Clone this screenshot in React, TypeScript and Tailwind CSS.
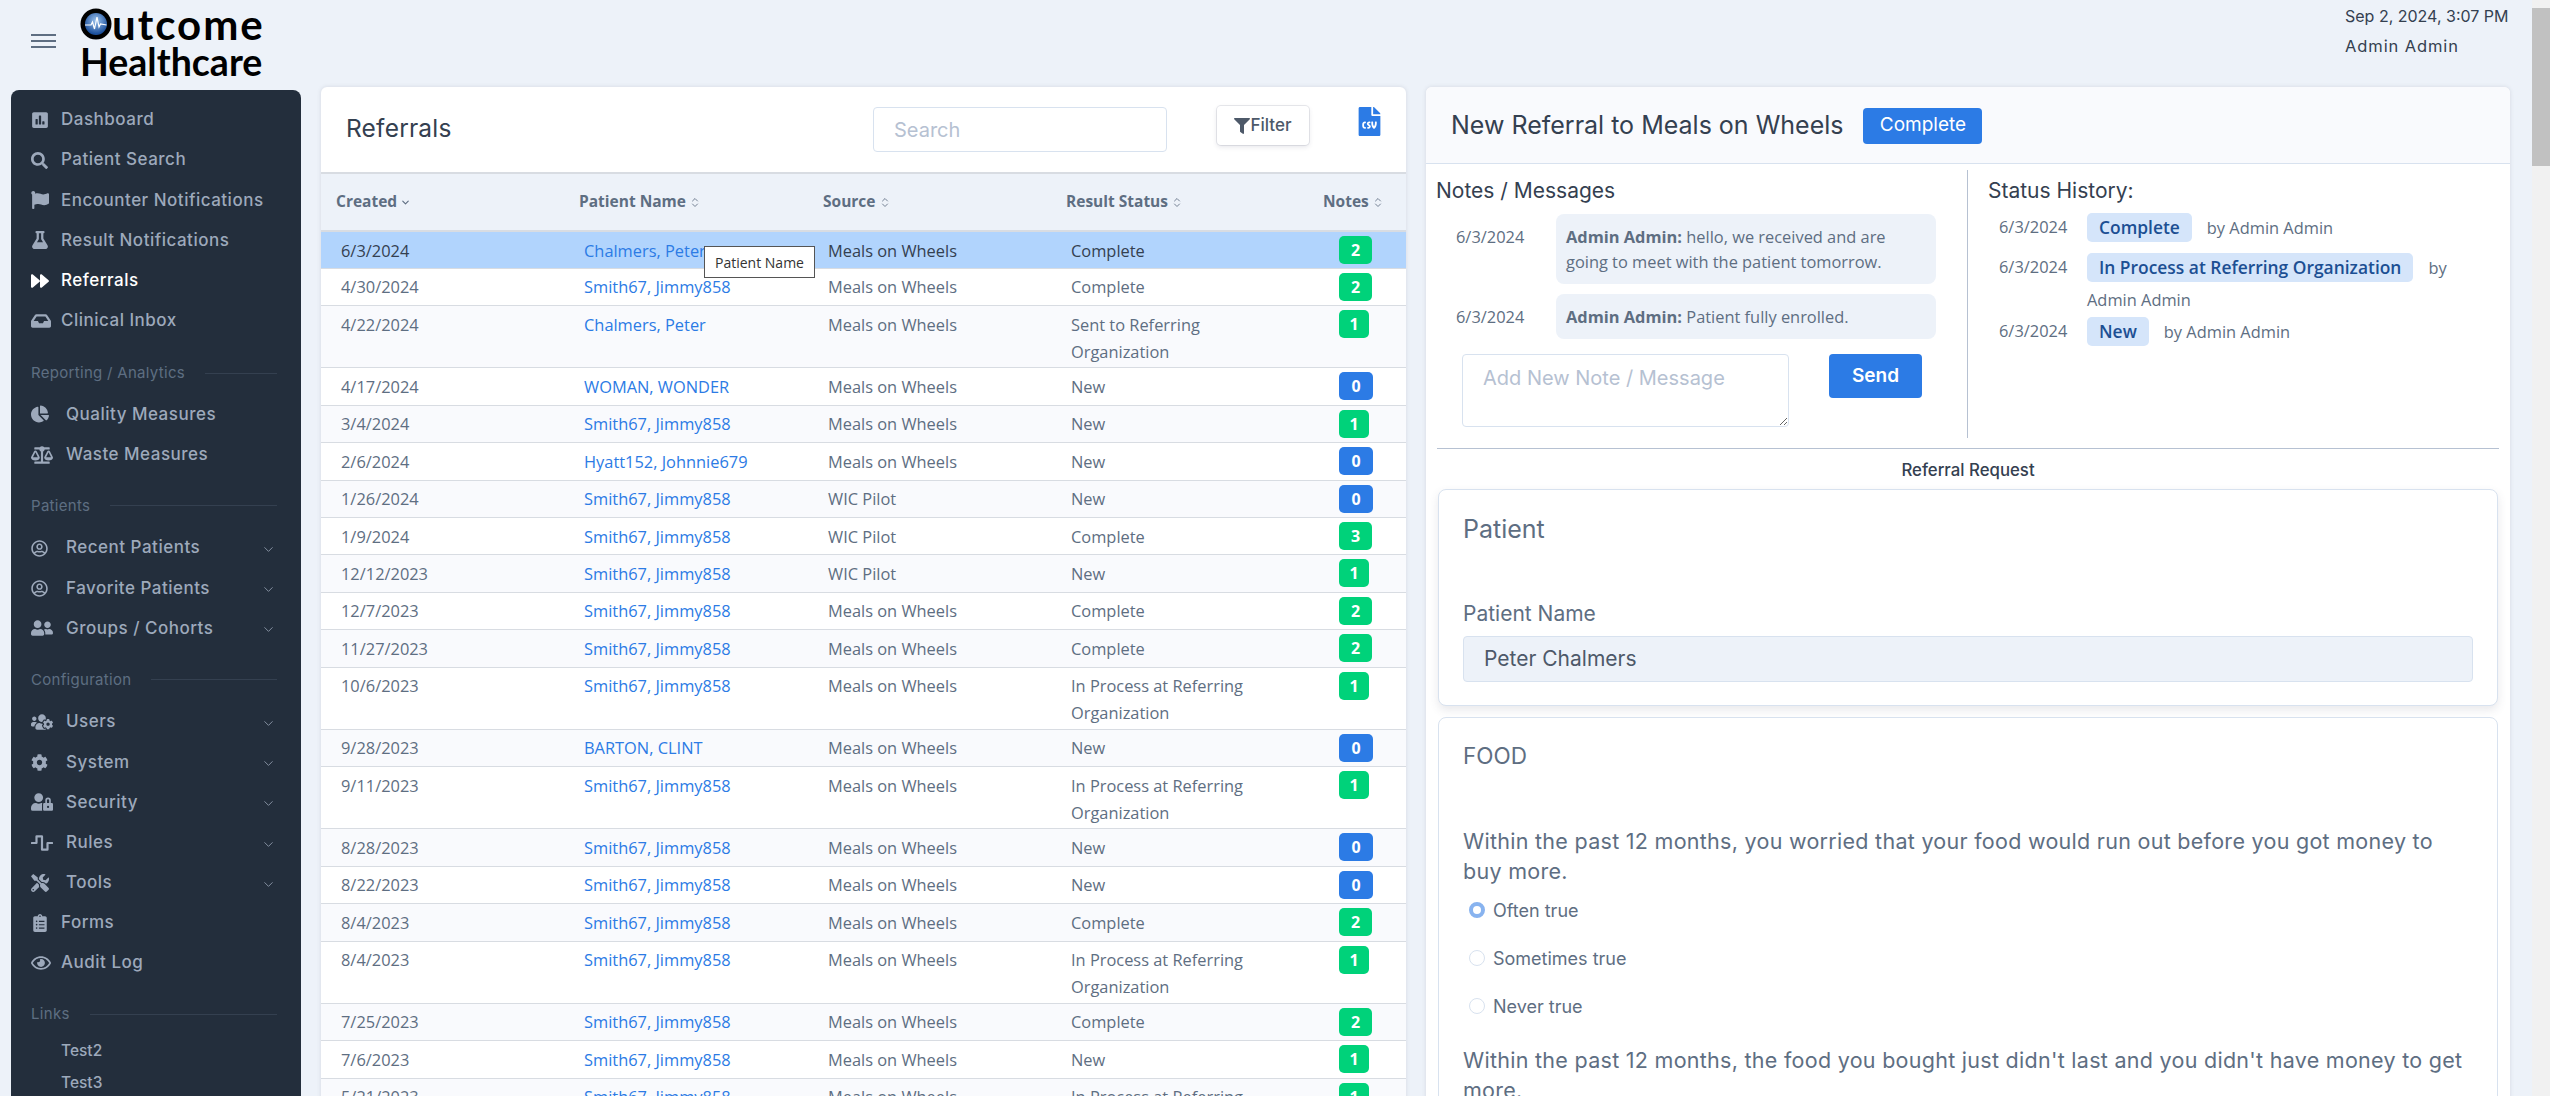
import React from 'react';
import { ChevronDown, ChevronsUpDown } from 'lucide-react';
import {
  FaPoll, FaSearch, FaFlag, FaFlask, FaForward, FaInbox, FaChartPie, FaBalanceScale, FaRegUserCircle,
  FaUserFriends, FaUsersCog, FaCog, FaUserLock, FaWaveSquare, FaTools, FaClipboardList, FaRegEye, FaFilter, FaFileCsv,
} from 'react-icons/fa';

const SMITH = 'Smith67, Jimmy858';
const MOW = 'Meals on Wheels';
const IN_PROCESS = 'In Process at Referring Organization';

const rows: [string, string, string, string, number][] = [
  ['6/3/2024', 'Chalmers, Peter', MOW, 'Complete', 2],
  ['4/30/2024', SMITH, MOW, 'Complete', 2],
  ['4/22/2024', 'Chalmers, Peter', MOW, 'Sent to Referring Organization', 1],
  ['4/17/2024', 'WOMAN, WONDER', MOW, 'New', 0],
  ['3/4/2024', SMITH, MOW, 'New', 1],
  ['2/6/2024', 'Hyatt152, Johnnie679', MOW, 'New', 0],
  ['1/26/2024', SMITH, 'WIC Pilot', 'New', 0],
  ['1/9/2024', SMITH, 'WIC Pilot', 'Complete', 3],
  ['12/12/2023', SMITH, 'WIC Pilot', 'New', 1],
  ['12/7/2023', SMITH, MOW, 'Complete', 2],
  ['11/27/2023', SMITH, MOW, 'Complete', 2],
  ['10/6/2023', SMITH, MOW, IN_PROCESS, 1],
  ['9/28/2023', 'BARTON, CLINT', MOW, 'New', 0],
  ['9/11/2023', SMITH, MOW, IN_PROCESS, 1],
  ['8/28/2023', SMITH, MOW, 'New', 0],
  ['8/22/2023', SMITH, MOW, 'New', 0],
  ['8/4/2023', SMITH, MOW, 'Complete', 2],
  ['8/4/2023', SMITH, MOW, IN_PROCESS, 1],
  ['7/25/2023', SMITH, MOW, 'Complete', 2],
  ['7/6/2023', SMITH, MOW, 'New', 1],
  ['5/21/2023', SMITH, MOW, IN_PROCESS, 1],
];

function NavItem({ icon, label, wide, sub, active }: { icon: React.ReactNode; label: string; wide?: boolean; sub?: boolean; active?: boolean }) {
  return (
    <div className={`flex items-center h-[40.15px] text-[17px] font-medium tracking-[0.5px] ${active ? 'text-white' : 'text-[#9da9bb]'}`}>
      <span className={`flex items-center shrink-0 ${wide ? 'w-[35px]' : 'w-[30px]'}`}>{icon}</span>
      <span className="flex-1">{label}</span>
      {sub && <ChevronDown className="w-[15px] h-[15px] mr-[5px] mt-[3px]" strokeWidth={1.25} />}
    </div>
  );
}

function NavLabel({ text, className }: { text: string; className: string }) {
  return (
    <div className={`flex items-center gap-[20px] text-[15px] text-[#5e6e82] pr-[4px] ${className}`}>
      <span className="tracking-[0.3px]">{text}</span>
      <span className="flex-1 h-px bg-[#344050]" />
    </div>
  );
}

function Sidebar() {
  return (
    <aside className="w-[290px] ml-[11px] mt-[3px] shrink-0 rounded-t-[8px] bg-[#232e3c] pl-[20px] pr-[20px] pt-[10px]">
      <NavItem icon={<FaPoll size={18} />} label="Dashboard" />
      <NavItem icon={<FaSearch size={17} />} label="Patient Search" />
      <NavItem icon={<FaFlag size={18} />} label="Encounter Notifications" />
      <NavItem icon={<FaFlask size={18} />} label="Result Notifications" />
      <NavItem icon={<FaForward size={18} />} label="Referrals" active />
      <NavItem icon={<FaInbox size={20} />} label="Clinical Inbox" />
      <NavLabel text="Reporting / Analytics" className="mt-[21px] mb-[10px]" />
      <NavItem wide icon={<FaChartPie size={18} />} label="Quality Measures" />
      <NavItem wide icon={<FaBalanceScale size={22} />} label="Waste Measures" />
      <NavLabel text="Patients" className="mt-[20px] mb-[11px]" />
      <NavItem wide sub icon={<FaRegUserCircle size={17} />} label="Recent Patients" />
      <NavItem wide sub icon={<FaRegUserCircle size={17} />} label="Favorite Patients" />
      <NavItem wide sub icon={<FaUserFriends size={22} />} label="Groups / Cohorts" />
      <NavLabel text="Configuration" className="mt-[20px] mb-[11px]" />
      <NavItem wide sub icon={<FaUsersCog size={22} />} label="Users" />
      <NavItem wide sub icon={<FaCog size={17} />} label="System" />
      <NavItem wide sub icon={<FaUserLock size={22} />} label="Security" />
      <NavItem wide sub icon={<FaWaveSquare size={22} />} label="Rules" />
      <NavItem wide sub icon={<FaTools size={18} />} label="Tools" />
      <NavItem icon={<FaClipboardList size={18} />} label="Forms" />
      <NavItem icon={<FaRegEye size={20} />} label="Audit Log" />
      <NavLabel text="Links" className="mt-[20px] mb-[9px]" />
      <div className="pl-[30px] text-[15.5px] font-medium text-[#9da9bb] leading-[32px]">
        <div>Test2</div>
        <div>Test3</div>
      </div>
    </aside>
  );
}

function SortHead({ label, sorted }: { label: string; sorted?: boolean }) {
  return (
    <th className="text-left font-bold text-[15.5px] text-[#5e6e82] pl-[15px] h-[57px]">
      <span className="inline-flex items-center gap-[3px]">
        {label}
        {sorted ? <ChevronDown className="w-[11px] h-[11px]" strokeWidth={2.5} /> : <ChevronsUpDown className="w-[12px] h-[15px] text-[#748194]" strokeWidth={2} />}
      </span>
    </th>
  );
}

function NotesBadge({ n }: { n: number }) {
  return (
    <span className={`inline-flex items-center justify-center h-[28px] rounded-[5px] ml-[11px] text-white text-[16px] font-bold ${n === 0 ? 'bg-[#2c7be5] w-[34px]' : n === 1 ? 'bg-[#00d27a] w-[30px]' : 'bg-[#00d27a] w-[33px]'}`}>
      {n}
    </span>
  );
}

function ReferralsCard() {
  return (
    <section className="w-[1085px] ml-[20px] shrink-0 rounded-t-[6px] bg-white shadow-[0_0_4px_rgba(65,69,88,0.15)]">
      <div className="h-[87px] flex items-start border-b-[2px] border-[#d8dce2]">
        <h2 className="w-[150px] ml-[25px] mt-[26px] text-[24.5px] leading-[30px] text-[#344050] tracking-[0.2px]">Referrals</h2>
        <input placeholder="Search" readOnly className="ml-[377px] mt-[20px] w-[294px] h-[45px] px-[20px] rounded-[4px] border border-[#d8e2ef] text-[20px] text-[#344050] placeholder:text-[#b6c1d2] outline-none" />
        <button className="ml-[50px] mt-[19px] w-[92px] h-[39px] flex items-center justify-center rounded-[4px] bg-white text-[#4d5969] text-[17px] font-medium shadow-[0_0_0_1px_rgba(43,45,80,0.1),0_2px_5px_rgba(43,45,80,0.12)]">
          <FaFilter size={16} />Filter
        </button>
        <FaFileCsv size={29} className="ml-[46px] mt-[20px] text-[#2c7be5]" />
      </div>
      <div className="relative">
        <table className="w-full table-fixed border-collapse font-['Open_Sans',sans-serif]">
          <colgroup>
            <col className="w-[243px]" />
            <col className="w-[244px]" />
            <col className="w-[243px]" />
            <col className="w-[257px]" />
            <col />
          </colgroup>
          <thead className="bg-[#edf2f9] border-b-[2px] border-[#d8dce2]">
            <tr>
              <SortHead label="Created" sorted />
              <SortHead label="Patient Name" />
              <SortHead label="Source" />
              <SortHead label="Result Status" />
              <SortHead label="Notes" />
            </tr>
          </thead>
          <tbody className="text-[16.4px] leading-[27.3px] text-[#5e6e82]">
            {rows.map((r, i) => (
              <tr key={i} className={`border-b border-[#d8dce2] align-top ${i === 0 ? 'bg-[#b1d4fd] text-[#344050]' : i % 2 === 0 ? 'bg-[#f9fafd]' : 'bg-white'}`}>
                <td className="pl-[20px] pt-[4.5px] pb-[2.1px]">{r[0]}</td>
                <td className="pl-[20px] pt-[4.5px] pb-[2.1px] text-[#2c7be5]">{r[1]}</td>
                <td className="pl-[20px] pt-[4.5px] pb-[2.1px]">{r[2]}</td>
                <td className="pl-[20px] pr-[20px] pt-[4.5px] pb-[2.1px]">{r[3]}</td>
                <td className="pl-[20px] pt-[4px] h-[37.4px] leading-[28px]"><NotesBadge n={r[4]} /></td>
              </tr>
            ))}
          </tbody>
        </table>
        <div className="absolute left-[383px] top-[72px] w-[111px] h-[32px] flex items-center justify-center bg-white border border-[#555] text-[14px] text-[#333] font-['Open_Sans',sans-serif]">
          Patient Name
        </div>
      </div>
    </section>
  );
}

function NoteBubble({ date, text, className }: { date: string; text: string; className: string }) {
  return (
    <div className={`flex text-[16.4px] leading-[25px] text-[#5e6e82] ${className}`}>
      <div className="w-[120px] pl-[20px] pt-[10px]">{date}</div>
      <div className="w-[380px] px-[10px] py-[10px] rounded-[8px] bg-[#edf2f9]">
        <b className="font-bold">Admin Admin:</b> {text}
      </div>
    </div>
  );
}

function StatusBadge({ label }: { label: string }) {
  return <span className="inline-block h-[29px] px-[12px] rounded-[5px] bg-[#d5e5fa] text-[#1c4f93] text-[17.4px] font-semibold mr-[15px]">{label}</span>;
}

function StatusLine({ label, wrapBy, className }: { label: string; wrapBy?: boolean; className: string }) {
  return (
    <div className={`flex text-[16.4px] leading-[28px] text-[#5e6e82] ${className}`}>
      <div className="w-[99px] shrink-0 pl-[11px]">6/3/2024</div>
      <div className="flex-1">
        <StatusBadge label={label} />
        {wrapBy ? <span>by</span> : <span>by Admin Admin</span>}
        {wrapBy && <div className="mt-[4px]">Admin Admin</div>}
      </div>
    </div>
  );
}

function Radio({ label, checked, className }: { label: string; checked?: boolean; className: string }) {
  return (
    <div className={`flex items-center h-[24px] pl-[6px] gap-[8px] ${className}`}>
      <span className={`w-[16px] h-[16px] rounded-full ${checked ? 'border-[4px] border-[#88b3ef] bg-white' : 'border border-[#d8e2ef] bg-white'}`} />
      <span className="text-[18px] text-[#5e6e82]">{label}</span>
    </div>
  );
}

function DetailCard() {
  return (
    <section className="w-[1084px] ml-[20px] shrink-0 rounded-t-[6px] bg-white shadow-[0_0_4px_rgba(65,69,88,0.15)]">
      <div className="h-[77px] flex items-center rounded-t-[6px] bg-[#f9fafd] border-b border-[#d8e2ef] pl-[25px] pt-px">
        <h2 className="text-[25px] text-[#344050]">New Referral to Meals on Wheels</h2>
        <span className="ml-[20px] w-[119px] h-[36px] flex items-center justify-center rounded-[4px] bg-[#2c7be5] text-white text-[19px]">Complete</span>
      </div>
      <div className="flex h-[284px] pt-[6px] px-[10px]">
        <div className="w-[532px] h-[268px] border-r border-[#b6c1d2] font-['Open_Sans',sans-serif]">
          <h3 className="mt-[4px] font-['Inter',sans-serif] text-[21px] leading-[34px] text-[#344050]">Notes / Messages</h3>
          <NoteBubble className="mt-[6px]" date="6/3/2024" text="hello, we received and are going to meet with the patient tomorrow." />
          <NoteBubble className="mt-[10px]" date="6/3/2024" text="Patient fully enrolled." />
          <div className="flex mt-[15px] ml-[26px]">
            <textarea readOnly placeholder="Add New Note / Message" className="w-[327px] h-[73px] px-[20px] py-[8px] rounded-[4px] border border-[#d8e2ef] text-[20px] placeholder:text-[#b6c1d2] outline-none font-['Inter',sans-serif]" />
            <button className="ml-[40px] w-[93px] h-[44px] rounded-[4px] bg-[#2c7be5] text-white text-[19px] font-semibold font-['Inter',sans-serif]">Send</button>
          </div>
        </div>
        <div className="flex-1 pl-[20px] font-['Open_Sans',sans-serif]">
          <h3 className="mt-[4px] font-['Inter',sans-serif] text-[21px] leading-[34px] text-[#344050]">Status History:</h3>
          <StatusLine className="mt-[5px]" label="Complete" />
          <StatusLine className="mt-[11px]" label="In Process at Referring Organization" wrapBy />
          <StatusLine className="mt-[3px]" label="New" />
        </div>
      </div>
      <div className="mx-[11px] border-t border-[#b6c1d2] pt-[9px] h-[41px] text-center text-[16.8px] font-medium text-[#344050] leading-[24px]">Referral Request</div>
      <div className="mx-[12px] h-[217px] rounded-[8px] border border-[#d8e2ef] bg-white shadow-[0_4px_10px_rgba(65,69,88,0.12)] px-[24px] pt-px">
        <h4 className="mt-[23px] text-[25px] leading-[30px] text-[#5e6e82]">Patient</h4>
        <div className="mt-[57px] text-[21px] leading-[26px] text-[#5e6e82]">Patient Name</div>
        <div className="mt-[9px] h-[46px] flex items-center px-[20px] rounded-[4px] border border-[#d8e2ef] bg-[#edf2f9] text-[21px] text-[#4d5969]">Peter Chalmers</div>
      </div>
      <div className="mx-[12px] mt-[11px] rounded-t-[8px] border border-[#d8e2ef] bg-white px-[24px] pt-px pb-[80px]">
        <h4 className="mt-[22px] text-[22.5px] leading-[30px] text-[#5e6e82]">FOOD</h4>
        <p className="mt-[55px] text-[21.5px] tracking-[0.28px] leading-[30px] text-[#5e6e82]">Within the past 12 months, you worried that your food would run out before you got money to buy more.</p>
        <Radio className="mt-[12px]" label="Often true" checked />
        <Radio className="mt-[24px]" label="Sometimes true" />
        <Radio className="mt-[24px]" label="Never true" />
        <p className="mt-[27px] text-[21.5px] tracking-[0.28px] leading-[30px] text-[#5e6e82]">Within the past 12 months, the food you bought just didn't last and you didn't have money to get more.</p>
      </div>
    </section>
  );
}

export default function App() {
  return (
    <div className="flex h-[1096px] overflow-hidden bg-[#edf2f9] font-['Inter',sans-serif]">
      <div className="flex-1 min-w-0">
        <header className="h-[87px] flex items-start">
          <div className="ml-[31px] mt-[34px] w-[25px] flex flex-col gap-[4px]">
            <span className="h-[2px] bg-[#5e6e82]" />
            <span className="h-[2px] bg-[#5e6e82]" />
            <span className="h-[2px] bg-[#5e6e82]" />
          </div>
          <div className="ml-[24px] mt-[6px] w-[195px] font-['Lato',sans-serif] font-bold text-black leading-[36px]">
            <div className="flex items-center text-[42px] tracking-[2px]">
              <svg viewBox="0 0 32 32" className="w-[32px] h-[32px] shrink-0">
                <defs>
                  <radialGradient id="logoGlobe" cx="50%" cy="35%" r="60%">
                    <stop offset="0%" stopColor="#9cc3ee" />
                    <stop offset="100%" stopColor="#1b4f9b" />
                  </radialGradient>
                </defs>
                <circle cx="16" cy="16" r="15.5" fill="#000" />
                <circle cx="16" cy="16" r="11" fill="url(#logoGlobe)" />
                <path d="M5 17h6l1.5-3 2 7 2.5-12 2 10 1.5-3 6 1" fill="none" stroke="#fff" strokeWidth="1.2" />
              </svg>
              <span>utcome</span>
            </div>
            <div className="mt-[2px] text-[37.5px]">Healthcare</div>
          </div>
          <div className="ml-auto mr-[22px] mt-[1px] w-[165px] text-[16px] leading-[30px] text-[#344050] whitespace-nowrap">
            <div>Sep 2, 2024, 3:07 PM</div>
            <div className="text-[16.5px] tracking-[0.9px]">Admin Admin</div>
          </div>
        </header>
        <div className="flex items-start">
          <Sidebar />
          <ReferralsCard />
          <DetailCard />
        </div>
      </div>
      <div className="w-[18px] shrink-0 bg-[#f1f1f1] pt-[8px]">
        <div className="h-[158px] bg-[#c1c1c1]" />
      </div>
    </div>
  );
}
